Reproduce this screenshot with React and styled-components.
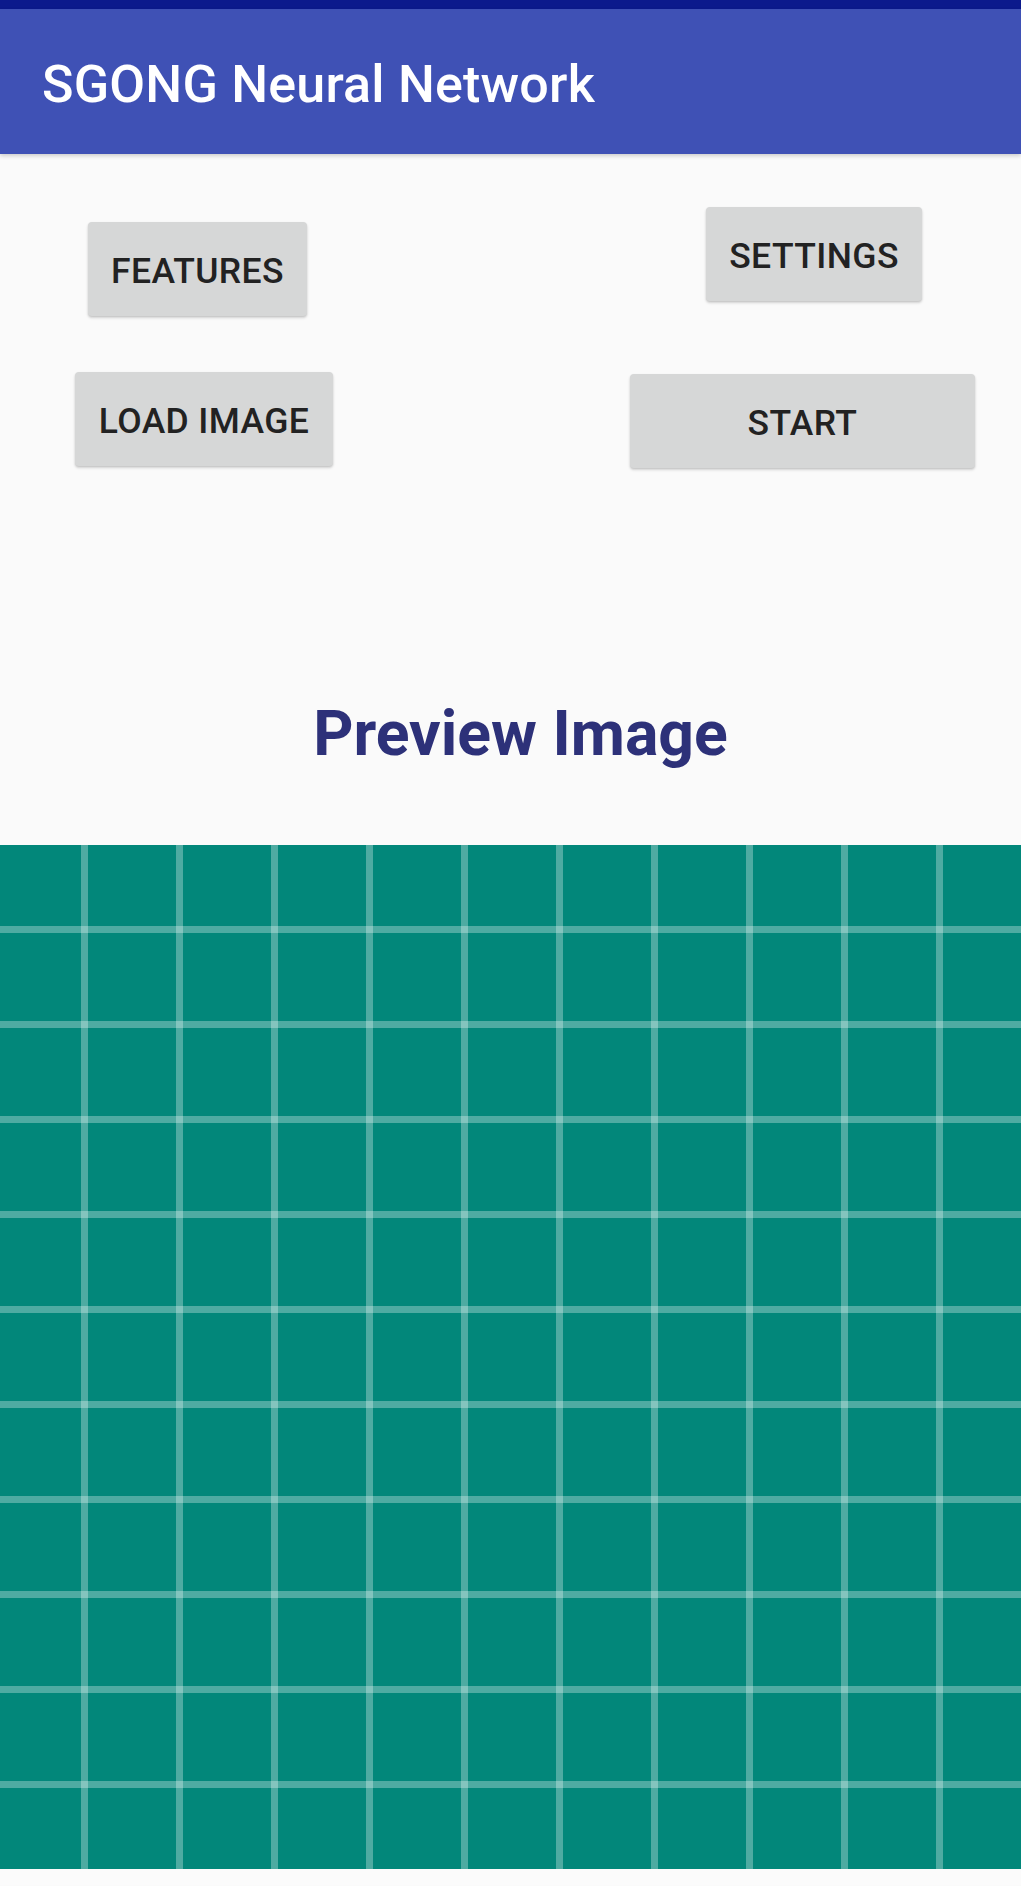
import React from 'react';
import styled, { createGlobalStyle } from 'styled-components';

const GlobalStyle = createGlobalStyle`
    html, body {
        margin: 0;
        padding: 0;
        background: #fafafa;
    }
    body {
        font-family: Roboto, 'Noto Sans', sans-serif;
    }
`;

const buttons = {
    left: [
        { label: 'FEATURES', width: 219, top: 68, side: 13 },
        { label: 'LOAD IMAGE', width: 258, top: 56, side: 0 },
    ],
    right: [
        { label: 'SETTINGS', width: 216, top: 53, side: 53 },
        { label: 'START', width: 345, top: 73, side: 0 },
    ],
};

const App = () => {
    return (
        <Screen>
            <GlobalStyle />
            <StatusBar />
            <AppBar>
                <Title>SGONG Neural Network</Title>
            </AppBar>
            <Controls>
                <Column $align="left">
                    {buttons.left.map((b) => (
                        <RaisedButton
                            key={b.label}
                            type="button"
                            $width={b.width}
                            $top={b.top}
                            $side={b.side}
                            $align="left"
                        >
                            {b.label}
                        </RaisedButton>
                    ))}
                </Column>
                <Column $align="right">
                    {buttons.right.map((b) => (
                        <RaisedButton
                            key={b.label}
                            type="button"
                            $width={b.width}
                            $top={b.top}
                            $side={b.side}
                            $align="right"
                        >
                            {b.label}
                        </RaisedButton>
                    ))}
                </Column>
            </Controls>
            <PreviewTitle>Preview Image</PreviewTitle>
            <PreviewGrid />
            <BottomGap />
        </Screen>
    );
};

const Screen = styled.div`
    width: 1021px;
    min-height: 1886px;
    background: #fafafa;
    display: flex;
    flex-direction: column;
`;

const StatusBar = styled.div`
    height: 9px;
    background-color: #0c1a8c;
`;

const AppBar = styled.header`
    height: 145px;
    background-color: #3f51b5;
    display: flex;
    align-items: center;
    padding-left: 42px;
    box-shadow: 0 2px 4px rgba(0, 0, 0, 0.18);
    position: relative;
    z-index: 1;
`;

const Title = styled.h1`
    margin: 6px 0 0 0;
    color: #ffffff;
    font-family: Roboto, sans-serif;
    font-weight: 500;
    font-size: 52px;
    letter-spacing: 0.2px;
`;

const Controls = styled.section`
    display: flex;
    justify-content: space-between;
    padding: 0 46px 0 75px;
`;

const Column = styled.div`
    display: flex;
    flex-direction: column;
    align-items: ${(p) => (p.$align === 'left' ? 'flex-start' : 'flex-end')};
`;

const RaisedButton = styled.button`
    width: ${(p) => p.$width}px;
    height: 94px;
    margin-top: ${(p) => p.$top}px;
    margin-left: ${(p) => (p.$align === 'left' ? p.$side : 0)}px;
    margin-right: ${(p) => (p.$align === 'right' ? p.$side : 0)}px;
    padding: 4px 0 0 0;
    border: 0;
    border-radius: 4px;
    background-color: #d6d7d7;
    color: #222222;
    font-family: Roboto, sans-serif;
    font-weight: 500;
    font-size: 35.5px;
    letter-spacing: 0.4px;
    box-shadow: 0 2px 3px rgba(0, 0, 0, 0.14), 0 1px 2px rgba(0, 0, 0, 0.1);
    cursor: pointer;
`;

const PreviewTitle = styled.h2`
    margin: 231px 0 0 0;
    padding-left: 20px;
    height: 70px;
    line-height: 70px;
    text-align: center;
    color: #2d3179;
    font-family: Roboto, sans-serif;
    font-weight: 700;
    font-size: 62.5px;
`;

const PreviewGrid = styled.div`
    margin-top: 76px;
    height: 1024px;
    background-color: #02877a;
    background-image: linear-gradient(
            to right,
            transparent 81px,
            rgba(255, 255, 255, 0.3) 81px,
            rgba(255, 255, 255, 0.3) 88px,
            transparent 88px
        ),
        linear-gradient(
            to bottom,
            transparent 81px,
            rgba(255, 255, 255, 0.3) 81px,
            rgba(255, 255, 255, 0.3) 88px,
            transparent 88px
        );
    background-size: 95px 95px;
`;

const BottomGap = styled.div`
    height: 16px;
    background: #fbfbfb;
`;

export default App;
